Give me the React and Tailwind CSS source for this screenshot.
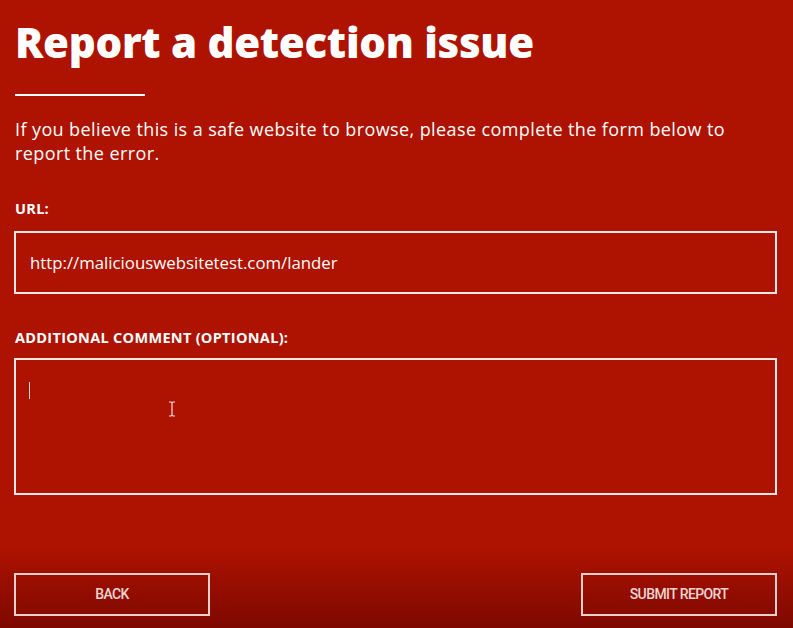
export default function App() {
  return (
    <div className="w-[793px] h-[628px] overflow-hidden bg-gradient-to-b from-[#ae1200] from-[87%] to-[#7e0900] text-white font-['Open_Sans',sans-serif] flex flex-col pl-[14px] pr-[16px]">
      <h1 className="mt-[14px] text-[42px] leading-[56px] font-extrabold tracking-[-0.3px] pl-[1px]">
        Report a detection issue
      </h1>
      <div className="mt-[24px] ml-[1px] w-[130px] h-[2px] bg-white" />
      <p className="mt-[21px] max-w-[745px] text-[18px] leading-[24px] font-medium tracking-[0.4px] pl-[1px]">
        If you believe this is a safe website to browse, please complete the form below to report the error.
      </p>

      <label className="mt-[35px] text-[14.5px] font-bold leading-[18px] tracking-[0.3px] pl-[1px]">URL:</label>
      <div className="mt-[13px] h-[63px] border-2 border-[#f3e7e5] flex items-center px-[14px] text-[16.8px] font-medium">
        http://maliciouswebsitetest.com/lander
      </div>

      <label className="mt-[35px] text-[14.5px] font-bold leading-[18px] tracking-[0.3px] pl-[1px]">
        ADDITIONAL COMMENT (OPTIONAL):
      </label>
      <div className="relative mt-[11px] h-[137px] border-2 border-[#f3e7e5]">
        <div className="absolute left-[13px] top-[22px] w-[1px] h-[17px] bg-[#e8d8d5]" />
        <svg className="absolute left-[152px] top-[41px]" width="8" height="16" viewBox="0 0 8 16">
          <path d="M1 1h2l1 1 1-1h2M4 2v12M1 15h2l1-1 1 1h2" stroke="#e9dcd8" strokeWidth="1.2" fill="none" />
        </svg>
      </div>

      <div className="mt-[78px] flex justify-between">
        <button className="w-[196px] h-[43px] border-2 border-[#e6cfcc] text-[14px] font-['Roboto',sans-serif] font-medium tracking-[-0.6px] text-[#ecd6d2]">
          BACK
        </button>
        <button className="w-[196px] h-[43px] border-2 border-[#e6cfcc] text-[14px] font-['Roboto',sans-serif] font-medium tracking-[-0.6px] text-[#ecd6d2]">
          SUBMIT REPORT
        </button>
      </div>
    </div>
  );
}
